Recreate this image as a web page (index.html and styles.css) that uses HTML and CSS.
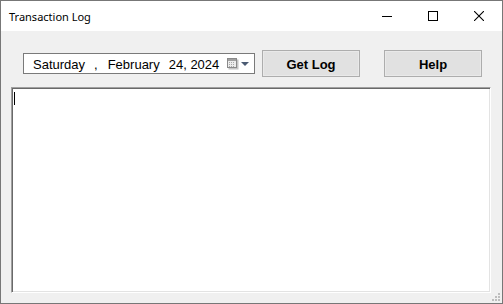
FILE: index.html
```html
<!DOCTYPE html>
<html lang="en">
<head>
  <meta charset="UTF-8">
  <meta name="viewport" content="width=device-width, initial-scale=1.0">
  <title>Transaction Log</title>
  <link rel="stylesheet" href="styles.css">
</head>
<body>
  <div class="window">
    <div class="titlebar">
      <span class="title">Transaction Log</span>
      <div class="caption">
        <button class="cap">
          <svg width="10" height="10" viewBox="0 0 10 10"><path d="M0 5.5h10" stroke="#000" stroke-width="1"/></svg>
        </button>
        <button class="cap">
          <svg width="10" height="10" viewBox="0 0 10 10"><rect x="0.5" y="0.5" width="9" height="9" fill="none" stroke="#000" stroke-width="1"/></svg>
        </button>
        <button class="cap">
          <svg width="10" height="10" viewBox="0 0 10 10"><path d="M0 0L10 10M10 0L0 10" stroke="#000" stroke-width="1.1"/></svg>
        </button>
      </div>
    </div>

    <div class="client">
      <div class="toolbar">
        <div class="datepicker">
          <span class="day">Saturday</span>
          <span class="sep">,</span>
          <span class="month">February</span>
          <span class="date">24, 2024</span>
          <span class="cal">
            <svg width="12" height="12" viewBox="0 0 12 12">
              <rect x="1.5" y="1.5" width="10" height="10" fill="#c4c4c4"/>
              <rect x="0.5" y="0.5" width="9" height="9" fill="#ececec" stroke="#8a8a8a" stroke-width="1"/>
              <rect x="1" y="1" width="8" height="2" fill="#a0a0a0"/>
              <path d="M2 4.5h1M4 4.5h1M6 4.5h1M2 6.5h1M4 6.5h1M6 6.5h1M2 8.5h1M4 8.5h1M6 8.5h1" stroke="#a8a8a8" stroke-width="1"/>
            </svg>
          </span>
          <span class="arrow"></span>
        </div>
        <button class="btn">Get Log</button>
        <button class="btn help">Help</button>
      </div>

      <div class="log">
        <span class="caret"></span>
      </div>

      <div class="grip">
        <svg width="8" height="8" viewBox="0 0 8 8" fill="#bdbdbd">
          <rect x="6" y="0" width="2" height="2"/>
          <rect x="3" y="3" width="2" height="2"/><rect x="6" y="3" width="2" height="2"/>
          <rect x="0" y="6" width="2" height="2"/><rect x="3" y="6" width="2" height="2"/><rect x="6" y="6" width="2" height="2"/>
        </svg>
      </div>
    </div>
  </div>
</body>
</html>
```

FILE: styles.css
```css
*{
  box-sizing: border-box;
}
body{
  margin: 0;
  font-family: "Liberation Sans", Arial, sans-serif;
  background: #fff;
}
.window{
  width: 503px;
  height: 304px;
  border: 1px solid #777;
  display: flex;
  flex-direction: column;
}
.titlebar{
  height: 30px;
  background: #fff;
  display: flex;
  align-items: center;
}
.title{
  font-family: "Noto Sans", sans-serif;
  font-size: 11px;
  color: #000;
  padding-left: 8px;
  padding-top: 1px;
  flex: 1;
}
.caption{
  display: flex;
  height: 100%;
}
.cap{
  width: 46px;
  height: 100%;
  border: none;
  background: transparent;
  display: flex;
  align-items: center;
  justify-content: center;
  padding: 0;
}
.client{
  flex: 1;
  background: #f0f0f0;
  display: flex;
  flex-direction: column;
  position: relative;
}
.toolbar{
  display: flex;
  align-items: center;
  margin-top: 19px;
  padding-left: 22px;
  height: 27px;
}
.datepicker{
  width: 232px;
  height: 21px;
  border: 1px solid #7a7a7a;
  background: #fff;
  display: flex;
  align-items: center;
  font-size: 13px;
  color: #000;
  padding-left: 9px;
  padding-top: 1px;
}
.sep{
  margin-left: 9px;
}
.month{
  margin-left: 10px;
}
.date{
  margin-left: 9px;
}
.cal{
  margin-left: 8px;
  display: flex;
}
.arrow{
  margin-left: 2px;
  width: 0;
  height: 0;
  border-left: 4px solid transparent;
  border-right: 4px solid transparent;
  border-top: 4px solid #4b5b73;
}
.btn{
  width: 98px;
  height: 27px;
  margin-left: 7px;
  border: 1px solid #adadad;
  background: #e1e1e1;
  box-shadow: inset 0 0 0 1px #e9e9e9;
  font-family: "Liberation Sans", Arial, sans-serif;
  font-weight: bold;
  font-size: 13px;
  color: #000;
  padding: 1px 0 0;
}
.help{
  margin-left: 24px;
}
.log{
  margin: 10px 0 0 10px;
  width: 480px;
  height: 206px;
  background: #fff;
  border: 1px solid;
  border-color: #a0a0a0 #fff #fff #a0a0a0;
  box-shadow: inset 1px 1px 0 #696969, inset -1px -1px 0 #e3e3e3;
  padding: 4px 0 0 2px;
}
.caret{
  display: block;
  width: 1px;
  height: 13px;
  background: #000;
}
.grip{
  position: absolute;
  right: 2px;
  bottom: 2px;
  display: flex;
}
```
